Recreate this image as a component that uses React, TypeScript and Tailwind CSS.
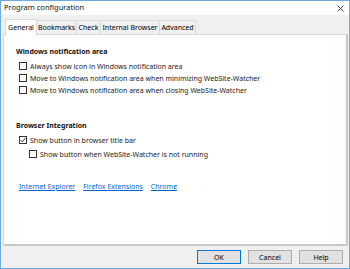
import React from "react";

const font = { fontFamily: '"Noto Sans", "Open Sans", sans-serif' };

function Check({ checked = false }: { checked?: boolean }) {
  return (
    <span className="flex h-[8px] w-[8px] shrink-0 items-center justify-center border border-[#333] bg-white">
      {checked && (
        <svg width="6" height="6" viewBox="0 0 6 6">
          <path d="M0.5 3 L2.3 4.8 L5.6 0.8" stroke="#222" strokeWidth="0.9" fill="none" />
        </svg>
      )}
    </span>
  );
}

function Row({ label, checked, indent }: { label: string; checked?: boolean; indent?: boolean }) {
  return (
    <div className={`flex h-[12px] items-center gap-[3px] ${indent ? "pl-[10px]" : ""}`}>
      <Check checked={checked} />
      <span className="text-[#1a1a1a]">{label}</span>
    </div>
  );
}

const tabs = [
  { t: "General", w: "w-[32px]" },
  { t: "Bookmarks", w: "w-[40px]" },
  { t: "Check", w: "w-[24px]" },
  { t: "Internal Browser", w: "w-[59px]" },
  { t: "Advanced", w: "w-[36px]" },
];

export default function App() {
  return (
    <div
      className="flex h-[269px] w-[350px] flex-col border border-[#6fa9de] bg-[#f0f0f0] text-[7px] leading-none text-black"
      style={font}
    >
      {/* Title bar */}
      <div className="flex h-[14px] shrink-0 items-center justify-between bg-white pl-[3px] pr-[5px]">
        <span className="text-[7.5px] text-[#111]">Program configuration</span>
        <svg width="7" height="7" viewBox="0 0 7 7">
          <path d="M0.5 0.5 L6.5 6.5 M6.5 0.5 L0.5 6.5" stroke="#333" strokeWidth="0.9" />
        </svg>
      </div>

      <div className="flex flex-1 flex-col px-[2px] pt-[3px]">
        {/* Tabs */}
        <div className="flex h-[16px] items-end pl-[2px]">
          {tabs.map(({ t, w }, i) =>
            i === 0 ? (
              <div
                key={t}
                className={`relative z-10 -mb-px flex h-[16px] items-center justify-center border border-b-0 border-[#d9d9d9] bg-white ${w}`}
              >
                {t}
              </div>
            ) : (
              <div
                key={t}
                className={`flex h-[14px] items-center justify-center border border-l-0 border-b-0 border-[#d9d9d9] bg-[#f0f0f0] ${w}`}
              >
                {t}
              </div>
            )
          )}
        </div>

        {/* Panel */}
        <div className="flex h-[211px] flex-col border border-[#d9d9d9] border-b-[#c8c8c8] border-r-[#c8c8c8] bg-white pl-[12px] pt-[13px] shadow-[1px_1px_0_#c8c8c8]">
          <div className="font-bold text-[#111]">Windows notification area</div>
          <div className="mt-[5px] flex flex-col pl-[3px]">
            <Row label="Always show icon in Windows notification area" />
            <Row label="Move to Windows notification area when minimizing WebSite-Watcher" />
            <Row label="Move to Windows notification area when closing WebSite-Watcher" />
          </div>

          <div className="mt-[26px] font-bold text-[#111]">Browser Integration</div>
          <div className="mt-[5px] flex flex-col gap-[2px] pl-[3px]">
            <Row label="Show button in browser title bar" checked />
            <Row label="Show button when WebSite-Watcher is not running" indent />
          </div>

          <div className="mt-[23px] flex gap-[8px] pl-[3px] text-[#0066cc] underline">
            <span>Internet Explorer</span>
            <span>Firefox Extensions</span>
            <span>Chrome</span>
          </div>
        </div>

        {/* Buttons */}
        <div className="mt-[5px] flex justify-end gap-[7px] pr-[4px]">
          <button className="h-[14px] w-[44px] border border-[#0078d7] bg-[#e1e1e1] text-[7px] leading-none">
            OK
          </button>
          <button className="h-[14px] w-[44px] border border-[#adadad] bg-[#e1e1e1] text-[7px] leading-none">
            Cancel
          </button>
          <button className="h-[14px] w-[44px] border border-[#adadad] bg-[#e1e1e1] text-[7px] leading-none">
            Help
          </button>
        </div>
      </div>
    </div>
  );
}
